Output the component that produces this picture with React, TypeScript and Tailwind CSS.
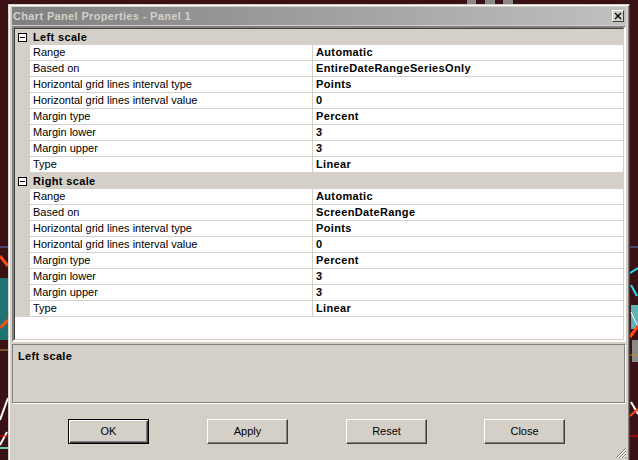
import React from "react";

type Row = { name: string; value: string };
type Section = { title: string; rows: Row[] };

const sections: Section[] = [
  {
    title: "Left scale",
    rows: [
      { name: "Range", value: "Automatic" },
      { name: "Based on", value: "EntireDateRangeSeriesOnly" },
      { name: "Horizontal grid lines interval type", value: "Points" },
      { name: "Horizontal grid lines interval value", value: "0" },
      { name: "Margin type", value: "Percent" },
      { name: "Margin lower", value: "3" },
      { name: "Margin upper", value: "3" },
      { name: "Type", value: "Linear" },
    ],
  },
  {
    title: "Right scale",
    rows: [
      { name: "Range", value: "Automatic" },
      { name: "Based on", value: "ScreenDateRange" },
      { name: "Horizontal grid lines interval type", value: "Points" },
      { name: "Horizontal grid lines interval value", value: "0" },
      { name: "Margin type", value: "Percent" },
      { name: "Margin lower", value: "3" },
      { name: "Margin upper", value: "3" },
      { name: "Type", value: "Linear" },
    ],
  },
];

function ChartBackdrop() {
  // bits of the chart window peeking out behind the dialog
  return (
    <svg className="absolute inset-0" width="638" height="460" viewBox="0 0 638 460">
      <rect x="467" y="0" width="9" height="4" fill="#8a8a8a" />
      <rect x="485" y="0" width="10" height="4" fill="#8a8a8a" />
      <rect x="503" y="0" width="10" height="4" fill="#8a8a8a" />
      <line x1="0" y1="247" x2="8" y2="247" stroke="#5a7ad0" strokeWidth="1" />
      <line x1="0" y1="256" x2="8" y2="266" stroke="#ff4a10" strokeWidth="3" />
      <rect x="0" y="278" width="8" height="62" fill="#1f7272" />
      <line x1="0" y1="328" x2="8" y2="320" stroke="#ff4a10" strokeWidth="3" />
      <line x1="0" y1="350" x2="8" y2="350" stroke="#c89028" strokeWidth="1" />
      <line x1="0" y1="420" x2="8" y2="398" stroke="#ffffff" strokeWidth="2" />
      <line x1="0" y1="445" x2="7" y2="432" stroke="#ffffff" strokeWidth="2" />
      <line x1="0" y1="436" x2="8" y2="436" stroke="#ff0000" strokeWidth="1" />
      <line x1="0" y1="448" x2="8" y2="448" stroke="#6ad0b0" strokeWidth="2" />
      <line x1="630" y1="247" x2="638" y2="247" stroke="#5a7ad0" strokeWidth="1" />
      <line x1="630" y1="273" x2="638" y2="268" stroke="#22e0f0" strokeWidth="2" />
      <line x1="631" y1="285" x2="637" y2="296" stroke="#22e0f0" strokeWidth="2" />
      <rect x="631" y="305" width="7" height="24" fill="#5fb5b5" />
      <line x1="631" y1="312" x2="637" y2="325" stroke="#ffffff" strokeWidth="1" />
      <line x1="630" y1="337" x2="638" y2="326" stroke="#ff4a10" strokeWidth="3" />
      <rect x="632" y="340" width="6" height="22" fill="#8a8a8a" />
      <line x1="630" y1="355" x2="638" y2="355" stroke="#c89028" strokeWidth="1" />
      <line x1="631" y1="402" x2="638" y2="414" stroke="#ffffff" strokeWidth="2" />
      <line x1="630" y1="416" x2="638" y2="409" stroke="#ff4a10" strokeWidth="2" />
      <line x1="630" y1="436" x2="638" y2="436" stroke="#ff0000" strokeWidth="1" />
    </svg>
  );
}

function Btn({ label, isDefault }: { label: string; isDefault?: boolean }) {
  return (
    <button
      className={
        "h-[25px] w-[81px] bg-[#d4d0c8] text-[11px] text-black " +
        (isDefault
          ? "border border-black shadow-[inset_1px_1px_0_#fff,inset_-1px_-1px_0_#404040,inset_-2px_-2px_0_#808080]"
          : "border border-t-white border-l-white border-r-[#404040] border-b-[#404040] shadow-[inset_-1px_-1px_0_#808080]")
      }
    >
      {label}
    </button>
  );
}

export default function App() {
  return (
    <div className="relative h-[460px] w-[638px] overflow-hidden bg-[#3a1115] font-['Liberation_Sans',Arial,sans-serif] text-[11px] leading-none text-black">
      <ChartBackdrop />
      <div className="relative ml-[8px] mt-[4px] flex h-[458px] w-[622px] flex-col border border-t-[#d4d0c8] border-l-[#d4d0c8] border-r-[#404040] border-b-[#404040] bg-[#d4d0c8] shadow-[inset_1px_1px_0_#fff,inset_-1px_-1px_0_#808080] px-[3px] pt-[2px]">
        {/* title bar */}
        <div className="flex h-[18px] items-center bg-gradient-to-r from-[#808080] to-[#c0c0c0] pl-[1px] pr-[2px]">
          <span className="font-bold tracking-[0.35px] text-[#d4d0c8]">Chart Panel Properties - Panel 1</span>
          <div className="ml-auto flex h-[12px] w-[12px] items-center justify-center border border-t-white border-l-white border-r-[#404040] border-b-[#404040] bg-[#d4d0c8]">
            <svg width="8" height="8" viewBox="0 0 8 8">
              <path d="M1 1 L7 7 M7 1 L1 7" stroke="#000" strokeWidth="1.3" />
            </svg>
          </div>
        </div>

        {/* property grid */}
        <div className="mt-[1px] h-[316px] border-2 border-t-[#808080] border-l-[#808080] border-r-white border-b-white">
          <div className="h-full border border-t-[#404040] border-l-[#404040] border-r-[#d4d0c8] border-b-[#d4d0c8] bg-white">
            {sections.map((s) => (
              <div key={s.title}>
                <div className="flex h-[16px] items-center bg-[#d4d0c8]">
                  <div className="flex w-[15px] justify-center">
                    <div className="flex h-[9px] w-[9px] items-center justify-center border border-[#000] bg-white">
                      <div className="h-px w-[5px] bg-black" />
                    </div>
                  </div>
                  <span className="pl-[3px] font-bold tracking-[0.35px]">{s.title}</span>
                </div>
                {s.rows.map((r) => (
                  <div key={r.name} className="flex h-[16px]">
                    <div className="w-[15px] shrink-0 bg-[#d4d0c8]" />
                    <div className="flex flex-1 border-b border-[#d4d0c8]">
                      <div className="flex w-[283px] items-center border-r border-[#d4d0c8] pl-[3px]">{r.name}</div>
                      <div className="flex flex-1 items-center pl-[3px] font-bold tracking-[0.35px]">{r.value}</div>
                    </div>
                  </div>
                ))}
              </div>
            ))}
          </div>
        </div>

        {/* description */}
        <div className="mt-[2px] h-[60px] border border-t-[#808080] border-l-[#808080] border-r-white border-b-white">
          <div className="h-full border border-t-[#d4d0c8] border-l-[#d4d0c8] border-r-[#808080] border-b-[#808080] pl-[4px] pt-[5px]">
            <span className="font-bold tracking-[0.35px]">Left scale</span>
          </div>
        </div>

        {/* buttons */}
        <div className="mt-[15px] flex pl-[56px]">
          <div className="flex gap-[58px]">
            <Btn label="OK" isDefault />
            <Btn label="Apply" />
            <Btn label="Reset" />
          </div>
          <div className="ml-[57px]">
            <Btn label="Close" />
          </div>
        </div>

        {/* resize grip */}
        <svg className="absolute bottom-[2px] right-[2px]" width="12" height="12" viewBox="0 0 12 12">
          <path d="M11 1 L1 11 M11 4 L4 11 M11 7 L7 11 M11 10 L10 11" stroke="#808080" strokeWidth="1" />
          <path d="M11 2 L2 11 M11 5 L5 11 M11 8 L8 11" stroke="#ffffff" strokeWidth="1" />
        </svg>
      </div>
    </div>
  );
}
